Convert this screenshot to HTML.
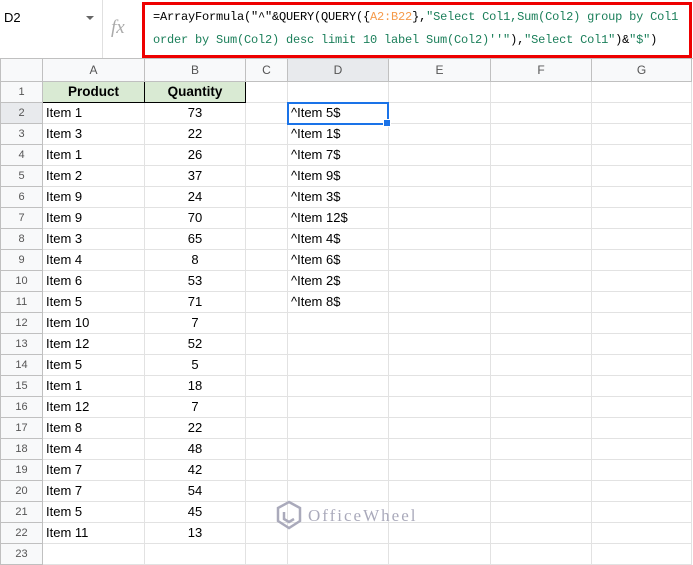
<!DOCTYPE html><html><head><style>
body{margin:0;width:693px;height:554px;overflow:hidden;background:#fff;font-family:"Liberation Sans",Arial,sans-serif;position:relative}
.top{position:absolute;left:0;top:0;width:693px;height:58px;background:#fff;border-bottom:1px solid #c7c7c7}
.nb{position:absolute;left:4px;top:10px;font-size:13px;color:#000}
.dd{position:absolute;left:86px;top:16px;width:0;height:0;border-left:4px solid transparent;border-right:4px solid transparent;border-top:4px solid #666}
.sep{position:absolute;left:102px;top:0;width:1px;height:58px;background:#e0e0e0}
.fx{position:absolute;left:111px;top:17px;font-family:"Liberation Serif",serif;font-style:italic;font-size:19px;color:#aaa}
.red{position:absolute;left:142px;top:2px;width:544px;height:50px;border:3px solid #e00;}
.f{position:absolute;left:153px;font-family:"Liberation Mono",monospace;font-size:12px;color:#000;white-space:pre;letter-spacing:-0.2px}
.g{color:#1b7f5a}.o{color:#f59a4a}
table{position:absolute;left:0;top:58px;border-collapse:collapse;table-layout:fixed;font-size:13px}
tr{height:21px}
td{border:1px solid #e2e2e2;height:20px;line-height:16px;padding:0 3px;white-space:nowrap;overflow:hidden;color:#000;box-sizing:border-box}
tr.h{height:23px}
tr.h td{height:23px;background:#f8f9fa;text-align:center;color:#555;font-size:12px;border-color:#c0c0c0}
td.r{background:#f8f9fa;text-align:center;color:#555;font-size:11px;border-color:#c0c0c0}
td.c{text-align:center}
td.hd{background:#d9ead3;font-weight:bold;text-align:center;font-size:13.5px;border-bottom:1px solid #000;border-left:1px solid #000;border-right:1px solid #000}
.sel{position:absolute;left:287px;top:102px;width:98px;height:19px;border:2px solid #1a73e8}
.sq{position:absolute;left:383px;top:119px;width:6px;height:6px;background:#1a73e8;border:1px solid #fff}
.wm{position:absolute;font-family:"Liberation Serif",serif;font-size:17px;color:#aab;letter-spacing:2px}
</style></head><body>
<div class="top"><div class="nb">D2</div><div class="dd"></div><div class="sep"></div><div class="fx">fx</div>
<div class="red"></div>
<div class="f" style="top:10px">=ArrayFormula("^"&amp;QUERY(QUERY({<span class="o">A2:B22</span>},<span class="g">"Select Col1,Sum(Col2) group by Col1</span></div>
<div class="f g" style="top:33px">order by Sum(Col2) desc limit 10 label Sum(Col2)''"<span style="color:#000">),</span>"Select Col1"<span style="color:#000">)&amp;</span>"$"<span style="color:#000">)</span></div>
</div>
<table>
<colgroup><col style="width:42px"><col style="width:102px"><col style="width:101px"><col style="width:42px"><col style="width:101px"><col style="width:102px"><col style="width:101px"><col style="width:100px"></colgroup>
<tr class="h"><td></td><td>A</td><td>B</td><td>C</td><td style="background:#e8eaed">D</td><td>E</td><td>F</td><td>G</td></tr>
<tr><td class="r">1</td><td class="hd">Product</td><td class="hd">Quantity</td><td></td><td></td><td></td><td></td><td></td></tr>
<tr><td class="r" style="background:#e8eaed">2</td><td>Item 1</td><td class="c">73</td><td></td><td>^Item 5$</td><td></td><td></td><td></td></tr>
<tr><td class="r">3</td><td>Item 3</td><td class="c">22</td><td></td><td>^Item 1$</td><td></td><td></td><td></td></tr>
<tr><td class="r">4</td><td>Item 1</td><td class="c">26</td><td></td><td>^Item 7$</td><td></td><td></td><td></td></tr>
<tr><td class="r">5</td><td>Item 2</td><td class="c">37</td><td></td><td>^Item 9$</td><td></td><td></td><td></td></tr>
<tr><td class="r">6</td><td>Item 9</td><td class="c">24</td><td></td><td>^Item 3$</td><td></td><td></td><td></td></tr>
<tr><td class="r">7</td><td>Item 9</td><td class="c">70</td><td></td><td>^Item 12$</td><td></td><td></td><td></td></tr>
<tr><td class="r">8</td><td>Item 3</td><td class="c">65</td><td></td><td>^Item 4$</td><td></td><td></td><td></td></tr>
<tr><td class="r">9</td><td>Item 4</td><td class="c">8</td><td></td><td>^Item 6$</td><td></td><td></td><td></td></tr>
<tr><td class="r">10</td><td>Item 6</td><td class="c">53</td><td></td><td>^Item 2$</td><td></td><td></td><td></td></tr>
<tr><td class="r">11</td><td>Item 5</td><td class="c">71</td><td></td><td>^Item 8$</td><td></td><td></td><td></td></tr>
<tr><td class="r">12</td><td>Item 10</td><td class="c">7</td><td></td><td></td><td></td><td></td><td></td></tr>
<tr><td class="r">13</td><td>Item 12</td><td class="c">52</td><td></td><td></td><td></td><td></td><td></td></tr>
<tr><td class="r">14</td><td>Item 5</td><td class="c">5</td><td></td><td></td><td></td><td></td><td></td></tr>
<tr><td class="r">15</td><td>Item 1</td><td class="c">18</td><td></td><td></td><td></td><td></td><td></td></tr>
<tr><td class="r">16</td><td>Item 12</td><td class="c">7</td><td></td><td></td><td></td><td></td><td></td></tr>
<tr><td class="r">17</td><td>Item 8</td><td class="c">22</td><td></td><td></td><td></td><td></td><td></td></tr>
<tr><td class="r">18</td><td>Item 4</td><td class="c">48</td><td></td><td></td><td></td><td></td><td></td></tr>
<tr><td class="r">19</td><td>Item 7</td><td class="c">42</td><td></td><td></td><td></td><td></td><td></td></tr>
<tr><td class="r">20</td><td>Item 7</td><td class="c">54</td><td></td><td></td><td></td><td></td><td></td></tr>
<tr><td class="r">21</td><td>Item 5</td><td class="c">45</td><td></td><td></td><td></td><td></td><td></td></tr>
<tr><td class="r">22</td><td>Item 11</td><td class="c">13</td><td></td><td></td><td></td><td></td><td></td></tr>
<tr><td class="r">23</td><td></td><td></td><td></td><td></td><td></td><td></td><td></td></tr>
</table>
<div class="sel"></div><div class="sq"></div>
<svg style="position:absolute;left:275px;top:500px" width="28" height="30" viewBox="0 0 28 30"><path d="M14 2 L25 8 L25 21 L14 28 L3 21 L3 8 Z" fill="none" stroke="#aab" stroke-width="2.5"/><path d="M9 12 L9 19 L14 22 L19 19" fill="none" stroke="#aab" stroke-width="2.5"/></svg>
<div class="wm" style="left:308px;top:506px">OfficeWheel</div>
</body></html>
